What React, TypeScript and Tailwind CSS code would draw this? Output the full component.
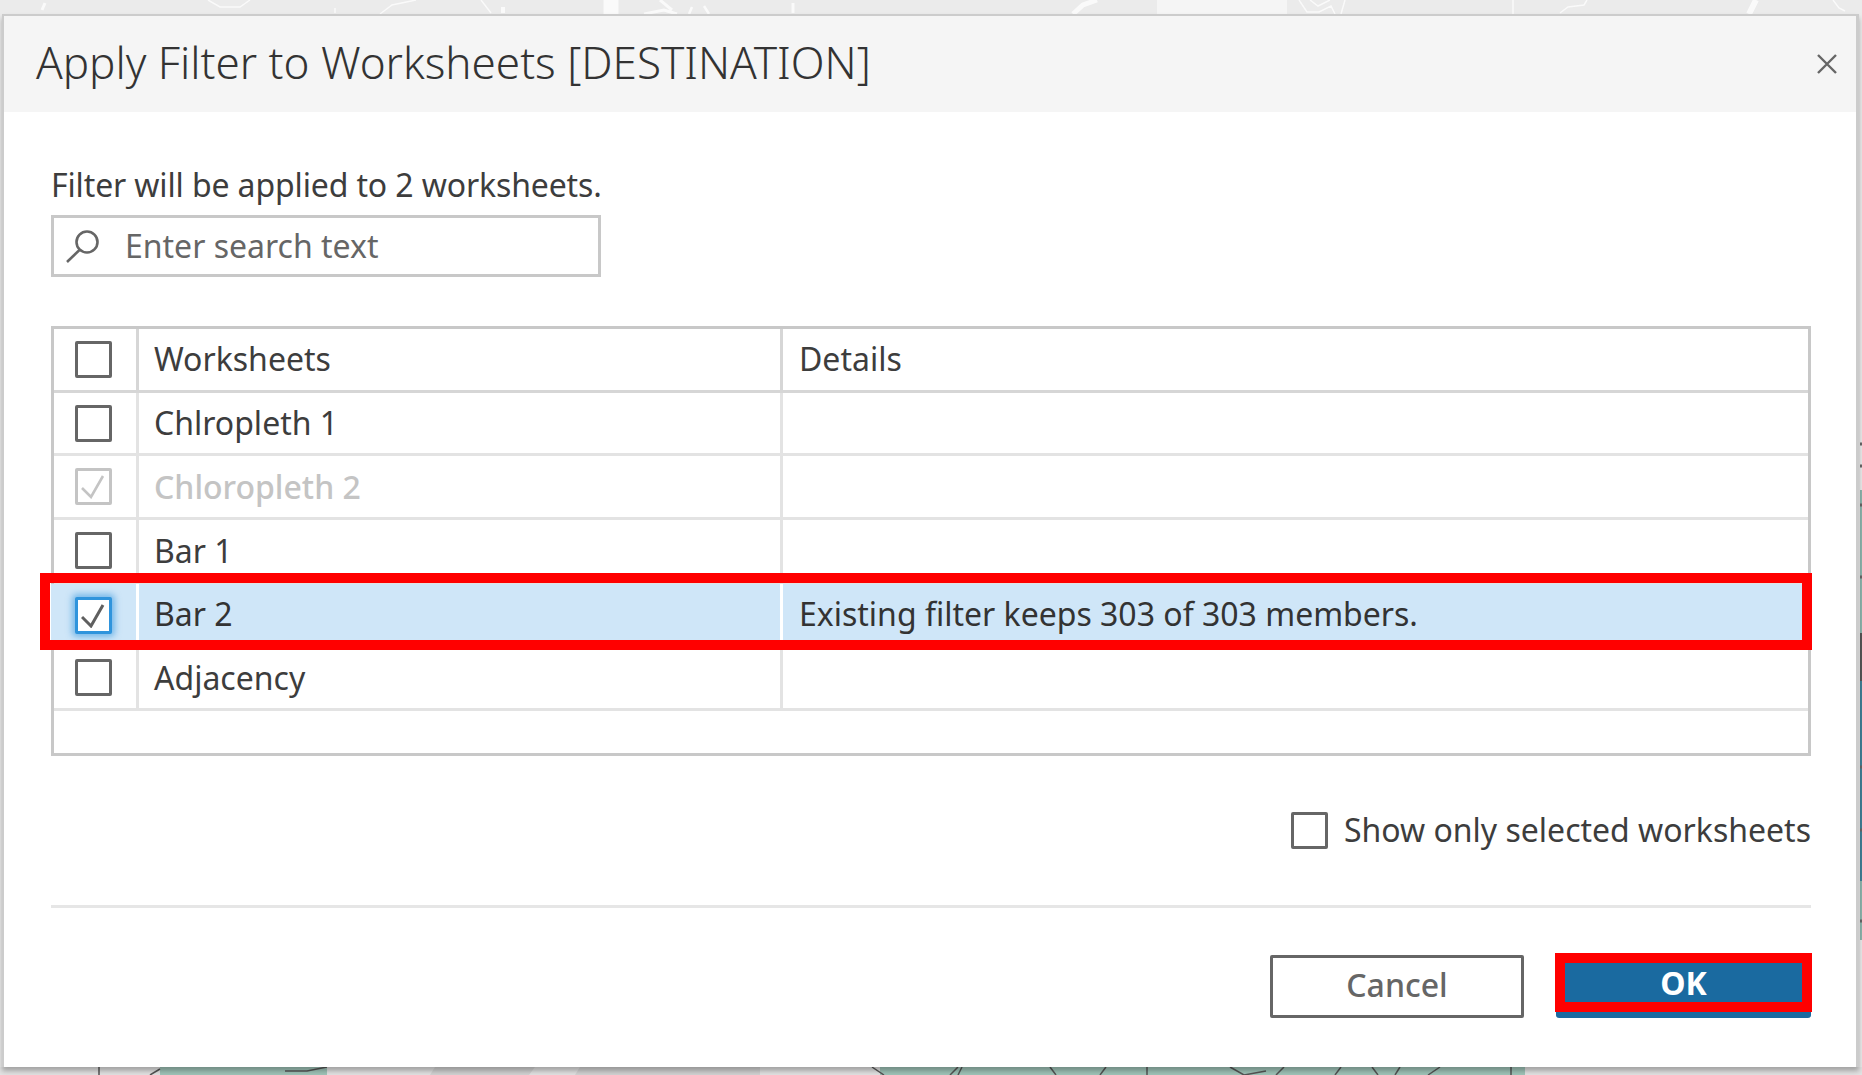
const rows = [
  { name: "Chlropleth 1", state: "off" },
  { name: "Chloropleth 2", state: "disabled" },
  { name: "Bar 1", state: "off" },
  { name: "Bar 2", state: "selected", details: "Existing filter keeps 303 of 303 members." },
  { name: "Adjacency", state: "off" },
];

function Check({ state }: { state: string }) {
  if (state === "disabled") {
    return (
      <span className="flex h-[37px] w-[37px] items-center justify-center rounded-[2px] border-[3px] border-[#c4c4c4]">
        <svg width="25" height="25" viewBox="0 0 25 25" fill="none" stroke="#c4c4c4" strokeWidth="2.6">
          <path d="M1 14l9 9L22 2" />
        </svg>
      </span>
    );
  }
  if (state === "selected") {
    return (
      <span className="flex h-[37px] w-[37px] items-center justify-center rounded-[2px] border-[3px] border-[#2f94dc] bg-white shadow-[0_0_6px_3px_rgba(47,148,220,0.55)]">
        <svg width="25" height="25" viewBox="0 0 25 25" fill="none" stroke="#5f5f5f" strokeWidth="3">
          <path d="M1 14l9 9L22 2" />
        </svg>
      </span>
    );
  }
  return <span className="block h-[37px] w-[37px] rounded-[2px] border-[3px] border-[#666666] bg-white" />;
}

function Row({ name, state, details }: { name: string; state: string; details?: string }) {
  if (state === "selected") {
    return (
      <div className="relative z-10 -ml-[3px] flex h-[63.7px] items-center bg-[#cfe6f8] text-[#333333]">
        <div className="flex h-full w-[85px] shrink-0 items-center pl-[24px]">
          <Check state={state} />
        </div>
        <div className="flex h-full w-[647px] shrink-0 items-center border-x-[3px] border-white pb-[3px] pl-[15px]">
          {name}
        </div>
        <div className="pb-[3px] pl-[16px]">{details}</div>
        <div className="absolute -top-[11px] -right-[4px] -bottom-[2px] -left-[11px] border-[10px] border-[#ff0000]" />
      </div>
    );
  }
  return (
    <div className="flex h-[63.7px] items-center border-b-[3px] border-[#e3e3e3]">
      <div className="flex h-full w-[82px] shrink-0 items-center pl-[21px]">
        <Check state={state} />
      </div>
      <div className="flex h-full w-[647px] shrink-0 items-center border-x-[3px] border-[#e3e3e3] pl-[15px]">
        <span className={state === "disabled" ? "font-medium text-[#c4c4c4]" : "text-[#3d3d3d]"}>{name}</span>
      </div>
      <div className="pl-[16px]">{details}</div>
    </div>
  );
}

// what shows of the map behind the dialog
function MapBehind() {
  return (
    <svg className="absolute inset-0" width="1862" height="1075" viewBox="0 0 1862 1075" fill="none">
      <rect x="1157" y="0" width="130" height="14" fill="#f5f5f5" />
      <g stroke="#ffffff" strokeWidth="1.5" opacity="0.75">
        <path d="M42 10l3-7" strokeWidth="3" />
        <path d="M208 0l12 7h20l10-7" />
        <path d="M335 8v5" />
        <path d="M380 14l12-9 24-5" />
        <path d="M481 0l10 13" />
        <path d="M503 7v6" strokeWidth="4" />
        <path d="M611 0v14" strokeWidth="15" />
        <path d="M644 14l20-4 13 4M660 0l12 10" strokeWidth="3" />
        <path d="M689 14l3-7M704 6l5 8" strokeWidth="2.5" />
        <path d="M793 3v10" strokeWidth="3" />
        <path d="M1073 14l10-9 14-5" strokeWidth="5" />
        <path d="M1299 0l8 12h12l12-6 4 8M1310 0l8 6 12-6M1345 0l-4 14" />
        <path d="M1513 0v14" />
        <path d="M1560 13l8-6 16-2 3-5" />
        <path d="M1756 0l-7 14" strokeWidth="6" />
        <path d="M1833 0l6 8 6 3" />
      </g>
      <rect x="0" y="1067" width="1862" height="8" fill="#e2e2e2" />
      <path d="M160 1067h167v8H160zM880 1067h645v8H880z" fill="#9fc4b8" />
      <path d="M435 1067h100l-6 8H430zM580 1067h180v8H575z" fill="#d2d2d2" />
      <g stroke="#555555" strokeWidth="1.5">
        <path d="M99 1067v8M150 1075l10-6M285 1071h22l20-4" />
        <path d="M872 1067l12 8M950 1075l8-8M962 1067l-4 8M1050 1067l6 8M1100 1075l6-8M1147 1075v-8M1230 1067l14 8 22-4M1284 1067l-8 8M1335 1075l6-8M1372 1067l6 8M1400 1067l-5 8M1428 1075l12-8M1511 1067v8" />
      </g>
      <rect x="1860" y="490" width="2" height="450" fill="#8db5ad" />
      <rect x="1860" y="633" width="2" height="48" fill="#555555" />
      <rect x="1860" y="681" width="2" height="200" fill="#3f7f96" />
      <path d="M1860 444h2M1860 466h2M1860 505h2M1860 577h2M1860 767h2M1860 830h2M1860 921h2" stroke="#666666" strokeWidth="3" />
    </svg>
  );
}

export default function App() {
  return (
    <div className="relative flex h-[1075px] w-[1862px] flex-col overflow-hidden bg-[#ebebeb] pt-[14px] pl-[2px] font-['Noto_Sans',sans-serif] text-[32px] text-[#3d3d3d]">
      <MapBehind />
      <div className="relative flex h-[1053px] w-[1857px] flex-col border-t-[2px] border-l-[2px] border-r-[3px] border-[#cccccc] bg-white shadow-[0_4px_5px_rgba(0,0,0,0.28)]">
        <div className="flex h-[96px] shrink-0 items-center justify-between bg-[#f5f5f5] pl-[32px] pr-[19px]">
          <h1 className="pb-[4px] text-[44px] font-light text-[#333333]">Apply Filter to Worksheets [DESTINATION]</h1>
          <svg width="20" height="20" viewBox="0 0 20 20" stroke="#666666" strokeWidth="2.4">
            <path d="M1 1l18 18M19 1L1 19" />
          </svg>
        </div>
        <div className="flex flex-1 flex-col px-[47px]">
          <p className="mt-[51px] mb-[1px] leading-[44px] tracking-[-0.13px]">Filter will be applied to 2 worksheets.</p>
          <div className="mt-[7px] flex h-[62px] w-[550px] items-center border-[3px] border-[#c8c8c8] pl-[11px] text-[#666666]">
            <svg width="36" height="33" viewBox="0 0 36 33" fill="none" stroke="#666666" strokeWidth="2.6">
              <circle cx="22" cy="12" r="10.5" />
              <path d="M15 19.5L2 32" />
            </svg>
            <span className="ml-[24px] pb-[1px]">Enter search text</span>
          </div>
          <div className="mt-[49px] h-[430px] w-[1760px] border-[3px] border-[#c8c8c8]">
            <div className="flex h-[63.8px] items-center border-b-[3px] border-[#d6d6d6]">
              <div className="flex h-full w-[82px] shrink-0 items-center pl-[21px]">
                <Check state="off" />
              </div>
              <div className="flex h-full w-[647px] shrink-0 items-center border-x-[3px] border-[#d6d6d6] pl-[15px]">
                Worksheets
              </div>
              <div className="pl-[16px]">Details</div>
            </div>
            {rows.map((row) => (
              <Row key={row.name} {...row} />
            ))}
          </div>
          <div className="mt-[50px] flex w-[1760px] items-center justify-end gap-[16px]">
            <Check state="off" />
            <span>Show only selected worksheets</span>
          </div>
          <div className="mt-[51px] h-[3px] w-[1760px] bg-[#e6e6e6]" />
          <div className="mt-[47px] flex w-[1760px] justify-end gap-[32px]">
            <button className="h-[63px] w-[254px] rounded-[2px] border-[3px] border-[#666666] pb-[4px] font-medium text-[#666666]">
              Cancel
            </button>
            <button className="relative h-[63px] w-[255px] rounded-b-[3px] bg-[#1a6aa0] pb-[8px] font-bold text-white">
              OK
              <span className="absolute -top-[2px] -right-[1px] bottom-[6px] -left-[1px] border-[10px] border-[#ff0000]" />
            </button>
          </div>
        </div>
      </div>
    </div>
  );
}
